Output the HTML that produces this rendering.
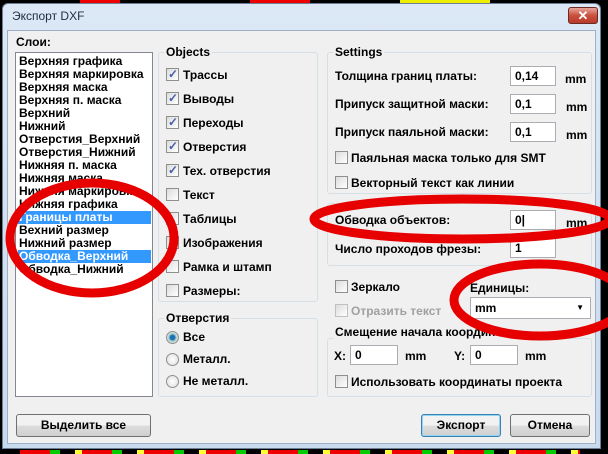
<!DOCTYPE html>
<html><head><meta charset="utf-8"><style>
*{margin:0;padding:0;box-sizing:border-box}
body{width:608px;height:454px;background:#000;position:relative;overflow:hidden;font-family:"Liberation Sans",sans-serif;font-size:12px;font-weight:bold;color:#000}
.a{position:absolute;white-space:nowrap}
.win{left:2px;top:3px;width:599px;height:446px;background:linear-gradient(#dce8f5,#c8daee);border:1px solid #6d7f96;border-radius:6px 6px 0 0}
.client{left:7px;top:30px;width:589px;height:414px;background:#f0f0f0;border:1px solid #a0b0c4}
.title{left:12px;top:9px;font-weight:normal;font-size:12px;color:#1e2e40}
.close{left:568px;top:7px;width:30px;height:17px;border:1px solid #6b2a22;border-radius:3px;background:linear-gradient(#e8a69a,#c9503e 50%,#b83a28);color:#fff;font-size:13px;text-align:center;line-height:15px}
.grp{border:1px solid #d5dfe5;border-radius:3px}
.gl{background:#f0f0f0;padding:0 2px}
.list{left:15px;top:52px;width:138px;height:345px;background:#fff;border:1px solid #828790;overflow:hidden}
.li{position:absolute;left:3px;height:13px;line-height:13px;white-space:nowrap}
.sel{background:#3399ff;color:#fff;left:2px;width:133px;padding-left:1px}
.cb{position:absolute;width:13px;height:13px;border:1px solid #8f8f8f;background:linear-gradient(135deg,#dcdcdc,#fff);}
.cb.on::after{content:"✓";position:absolute;left:1px;top:-2px;color:#4a5fa8;font-size:12px}
.inp{position:absolute;background:#fff;border:1px solid #abadb3;height:20px;padding-left:4px;line-height:18px}
.rd{position:absolute;width:13px;height:13px;border-radius:50%;border:1px solid #8f8f8f;background:radial-gradient(#fff,#dcdcdc)}
.btn{position:absolute;height:23px;border:1px solid #707070;border-radius:3px;background:linear-gradient(#f2f2f2 50%,#dddddd 50%,#cfcfcf);text-align:center;line-height:21px}
</style></head><body>
<div class="a" style="left:80px;top:0;width:40px;height:3px;background:#e00"></div>
<div class="a" style="left:250px;top:0;width:60px;height:3px;background:#e00"></div>
<div class="a" style="left:400px;top:0;width:90px;height:3px;background:#ee0"></div>
<div class="a" style="left:20px;top:450px;width:560px;height:4px;background:repeating-linear-gradient(90deg,#e00 0 30px,#0c0 30px 40px,#000 40px 55px,#ff3 55px 62px)"></div>
<div class="a win"></div>
<div class="a title">Экспорт DXF</div>
<div class="a close">✕</div>
<div class="a client"></div>

<div class="a" style="left:16px;top:35px">Слои:</div>
<div class="a list">
<div class="li" style="top:2px">Верхняя графика</div>
<div class="li" style="top:15px">Верхняя маркировка</div>
<div class="li" style="top:28px">Верхняя маска</div>
<div class="li" style="top:41px">Верхняя п. маска</div>
<div class="li" style="top:54px">Верхний</div>
<div class="li" style="top:67px">Нижний</div>
<div class="li" style="top:80px">Отверстия_Верхний</div>
<div class="li" style="top:93px">Отверстия_Нижний</div>
<div class="li" style="top:106px">Нижняя п. маска</div>
<div class="li" style="top:119px">Нижняя маска</div>
<div class="li" style="top:132px">Нижняя маркировка</div>
<div class="li" style="top:145px">Нижняя графика</div>
<div class="li sel" style="top:158px">Границы платы</div>
<div class="li" style="top:171px">Вехний размер</div>
<div class="li" style="top:184px">Нижний размер</div>
<div class="li sel" style="top:197px">Обводка_Верхний</div>
<div class="li" style="top:210px">Обводка_Нижний</div>
</div>

<div class="a grp" style="left:158px;top:52px;width:160px;height:250px"></div>
<div class="a gl" style="left:164px;top:45px">Objects</div>
<div class="cb on" style="left:166px;top:68px"></div><div class="a" style="left:183px;top:68px">Трассы</div>
<div class="cb on" style="left:166px;top:92px"></div><div class="a" style="left:183px;top:92px">Выводы</div>
<div class="cb on" style="left:166px;top:116px"></div><div class="a" style="left:183px;top:116px">Переходы</div>
<div class="cb on" style="left:166px;top:140px"></div><div class="a" style="left:183px;top:140px">Отверстия</div>
<div class="cb on" style="left:166px;top:164px"></div><div class="a" style="left:183px;top:164px">Тех. отверстия</div>
<div class="cb" style="left:166px;top:188px"></div><div class="a" style="left:183px;top:188px">Текст</div>
<div class="cb" style="left:166px;top:212px"></div><div class="a" style="left:183px;top:212px">Таблицы</div>
<div class="cb" style="left:166px;top:236px"></div><div class="a" style="left:183px;top:236px">Изображения</div>
<div class="cb" style="left:166px;top:260px"></div><div class="a" style="left:183px;top:260px">Рамка и штамп</div>
<div class="cb" style="left:166px;top:284px"></div><div class="a" style="left:183px;top:284px">Размеры:</div>

<div class="a grp" style="left:158px;top:318px;width:160px;height:79px"></div>
<div class="a gl" style="left:164px;top:311px">Отверстия</div>
<div class="rd" style="left:166px;top:331px;background:radial-gradient(#1f6fb5 30%,#9cc 45%,#ddd 70%)"></div><div class="a" style="left:183px;top:330px">Все</div>
<div class="rd" style="left:166px;top:353px"></div><div class="a" style="left:183px;top:352px">Металл.</div>
<div class="rd" style="left:166px;top:375px"></div><div class="a" style="left:183px;top:374px">Не металл.</div>

<div class="a grp" style="left:327px;top:52px;width:265px;height:142px"></div>
<div class="a gl" style="left:333px;top:45px">Settings</div>
<div class="a" style="left:335px;top:69px">Толщина границ платы:</div>
<div class="inp" style="left:510px;top:66px;width:46px">0,14</div><div class="a" style="left:565px;top:72px">mm</div>
<div class="a" style="left:335px;top:97px">Припуск защитной маски:</div>
<div class="inp" style="left:510px;top:94px;width:46px">0,1</div><div class="a" style="left:566px;top:100px">mm</div>
<div class="a" style="left:335px;top:125px">Припуск паяльной маски:</div>
<div class="inp" style="left:510px;top:122px;width:46px">0,1</div><div class="a" style="left:566px;top:128px">mm</div>
<div class="cb" style="left:335px;top:151px"></div><div class="a" style="left:351px;top:151px">Паяльная маска только для SMT</div>
<div class="cb" style="left:335px;top:176px"></div><div class="a" style="left:351px;top:176px">Векторный текст как линии</div>

<div class="a grp" style="left:327px;top:203px;width:265px;height:63px"></div>
<div class="a" style="left:335px;top:213px">Обводка объектов:</div>
<div class="inp" style="left:510px;top:210px;width:46px">0|</div><div class="a" style="left:566px;top:216px">mm</div>
<div class="a" style="left:335px;top:242px">Число проходов фрезы:</div>
<div class="inp" style="left:510px;top:238px;width:46px">1</div>

<div class="cb" style="left:335px;top:280px"></div><div class="a" style="left:351px;top:280px">Зеркало</div>
<div class="cb" style="left:335px;top:304px;border-color:#c0c0c0"></div><div class="a" style="left:351px;top:304px;color:#a0a0a0">Отразить текст</div>
<div class="a" style="left:470px;top:281px">Единицы:</div>
<div class="inp" style="left:470px;top:297px;width:121px;height:22px;line-height:20px">mm<span style="position:absolute;right:6px;font-size:8px">▼</span></div>

<div class="a grp" style="left:327px;top:338px;width:265px;height:59px"></div>
<div class="a gl" style="left:333px;top:325px">Смещение начала координат</div>
<div class="a" style="left:334px;top:349px">X:</div>
<div class="inp" style="left:350px;top:345px;width:48px">0</div><div class="a" style="left:405px;top:349px">mm</div>
<div class="a" style="left:454px;top:349px">Y:</div>
<div class="inp" style="left:470px;top:345px;width:48px">0</div><div class="a" style="left:525px;top:349px">mm</div>
<div class="cb" style="left:335px;top:375px"></div><div class="a" style="left:351px;top:375px">Использовать координаты проекта</div>

<div class="btn" style="left:16px;top:414px;width:135px">Выделить все</div>
<div class="btn" style="left:421px;top:414px;width:80px;border-color:#3c7fb1;box-shadow:inset 0 0 0 1px #8fd6f5">Экспорт</div>
<div class="btn" style="left:510px;top:414px;width:80px">Отмена</div>

<svg class="a" style="left:0;top:0" width="608" height="454">
<g fill="none" stroke="#e60000" stroke-width="9">
<ellipse cx="92" cy="238" rx="82" ry="55"/>
<ellipse cx="462" cy="219" rx="148" ry="20"/>
<ellipse cx="540" cy="300" rx="86" ry="36"/>
</g></svg>
</body></html>
